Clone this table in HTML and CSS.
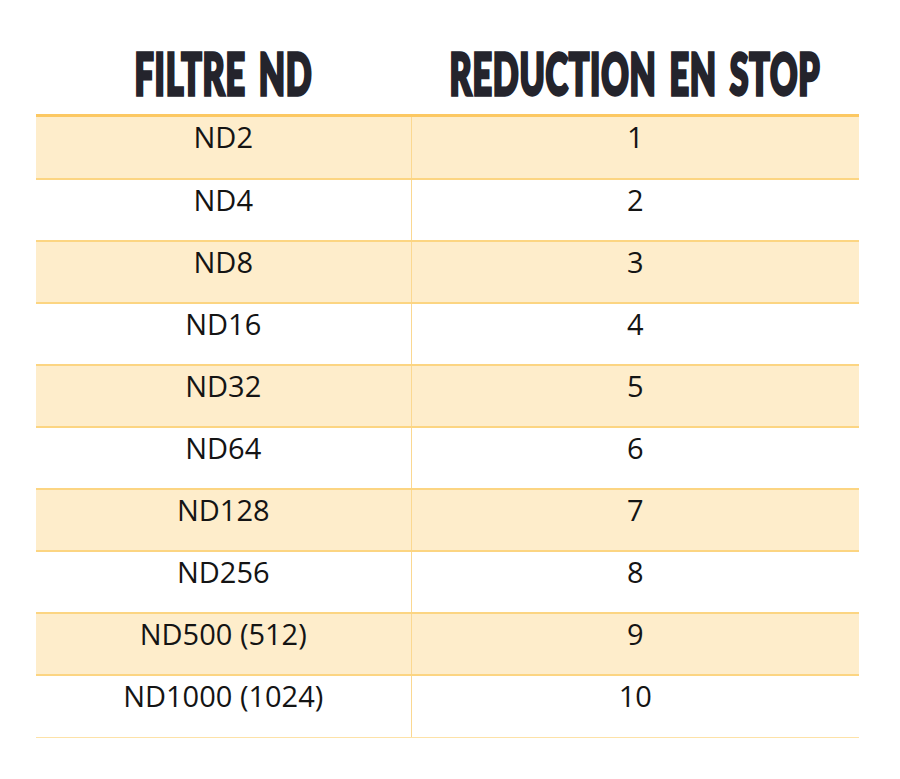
FILE: index.html
```html
<!DOCTYPE html>
<html lang="fr">
<head>
<meta charset="utf-8">
<title>Filtre ND</title>
<link rel="stylesheet" href="styles.css">
</head>
<body>
<table class="nd-table">
  <thead>
    <tr>
      <th class="col-filter"><span class="head-text">FILTRE ND</span></th>
      <th class="col-stop"><span class="head-text">REDUCTION EN STOP</span></th>
    </tr>
  </thead>
  <tbody>
    <tr class="odd"><td>ND2</td><td>1</td></tr>
    <tr><td>ND4</td><td>2</td></tr>
    <tr class="odd"><td>ND8</td><td>3</td></tr>
    <tr><td>ND16</td><td>4</td></tr>
    <tr class="odd"><td>ND32</td><td>5</td></tr>
    <tr><td>ND64</td><td>6</td></tr>
    <tr class="odd"><td>ND128</td><td>7</td></tr>
    <tr><td>ND256</td><td>8</td></tr>
    <tr class="odd"><td>ND500 (512)</td><td>9</td></tr>
    <tr class="last"><td>ND1000 (1024)</td><td>10</td></tr>
  </tbody>
</table>
</body>
</html>
```
FILE: styles.css
```css
html, body {
  margin: 0;
  padding: 0;
  background: #ffffff;
}

.nd-table {
  margin-left: 36px;
  width: 823px;
  border-collapse: collapse;
  table-layout: fixed;
  font-family: "Open Sans", "Noto Sans", sans-serif;
}

.col-filter {
  width: 375px;
}

.col-stop {
  width: 448px;
}

.nd-table th {
  height: 98px;
  padding: 0 0 16px;
  vertical-align: bottom;
  border-bottom: 3px solid #fcc862;
  text-align: center;
  font-family: Lato, "Liberation Sans", sans-serif;
  font-weight: 900;
  font-size: 34px;
  line-height: 30px;
  color: #24242c;
  white-space: nowrap;
}

.head-text {
  display: inline-block;
  transform: scaleY(1.65);
  transform-origin: 50% 100%;
  -webkit-text-stroke: 2px #24242c;
  letter-spacing: 0.8px;
  word-spacing: 4px;
}

.nd-table td {
  height: 59px;
  padding: 1px 0 0;
  vertical-align: top;
  text-align: center;
  font-size: 29px;
  line-height: 38px;
  color: #141414;
  border-bottom: 2px solid #fcd582;
}

.nd-table tr:first-child td {
  height: 60px;
}

.nd-table td:first-child {
  border-right: 1px solid #fbd891;
}

.nd-table tr.odd td {
  background: #feedcb;
}

.nd-table tr.last td {
  height: 60px;
  border-bottom: 1px solid #fde2a8;
}
```
